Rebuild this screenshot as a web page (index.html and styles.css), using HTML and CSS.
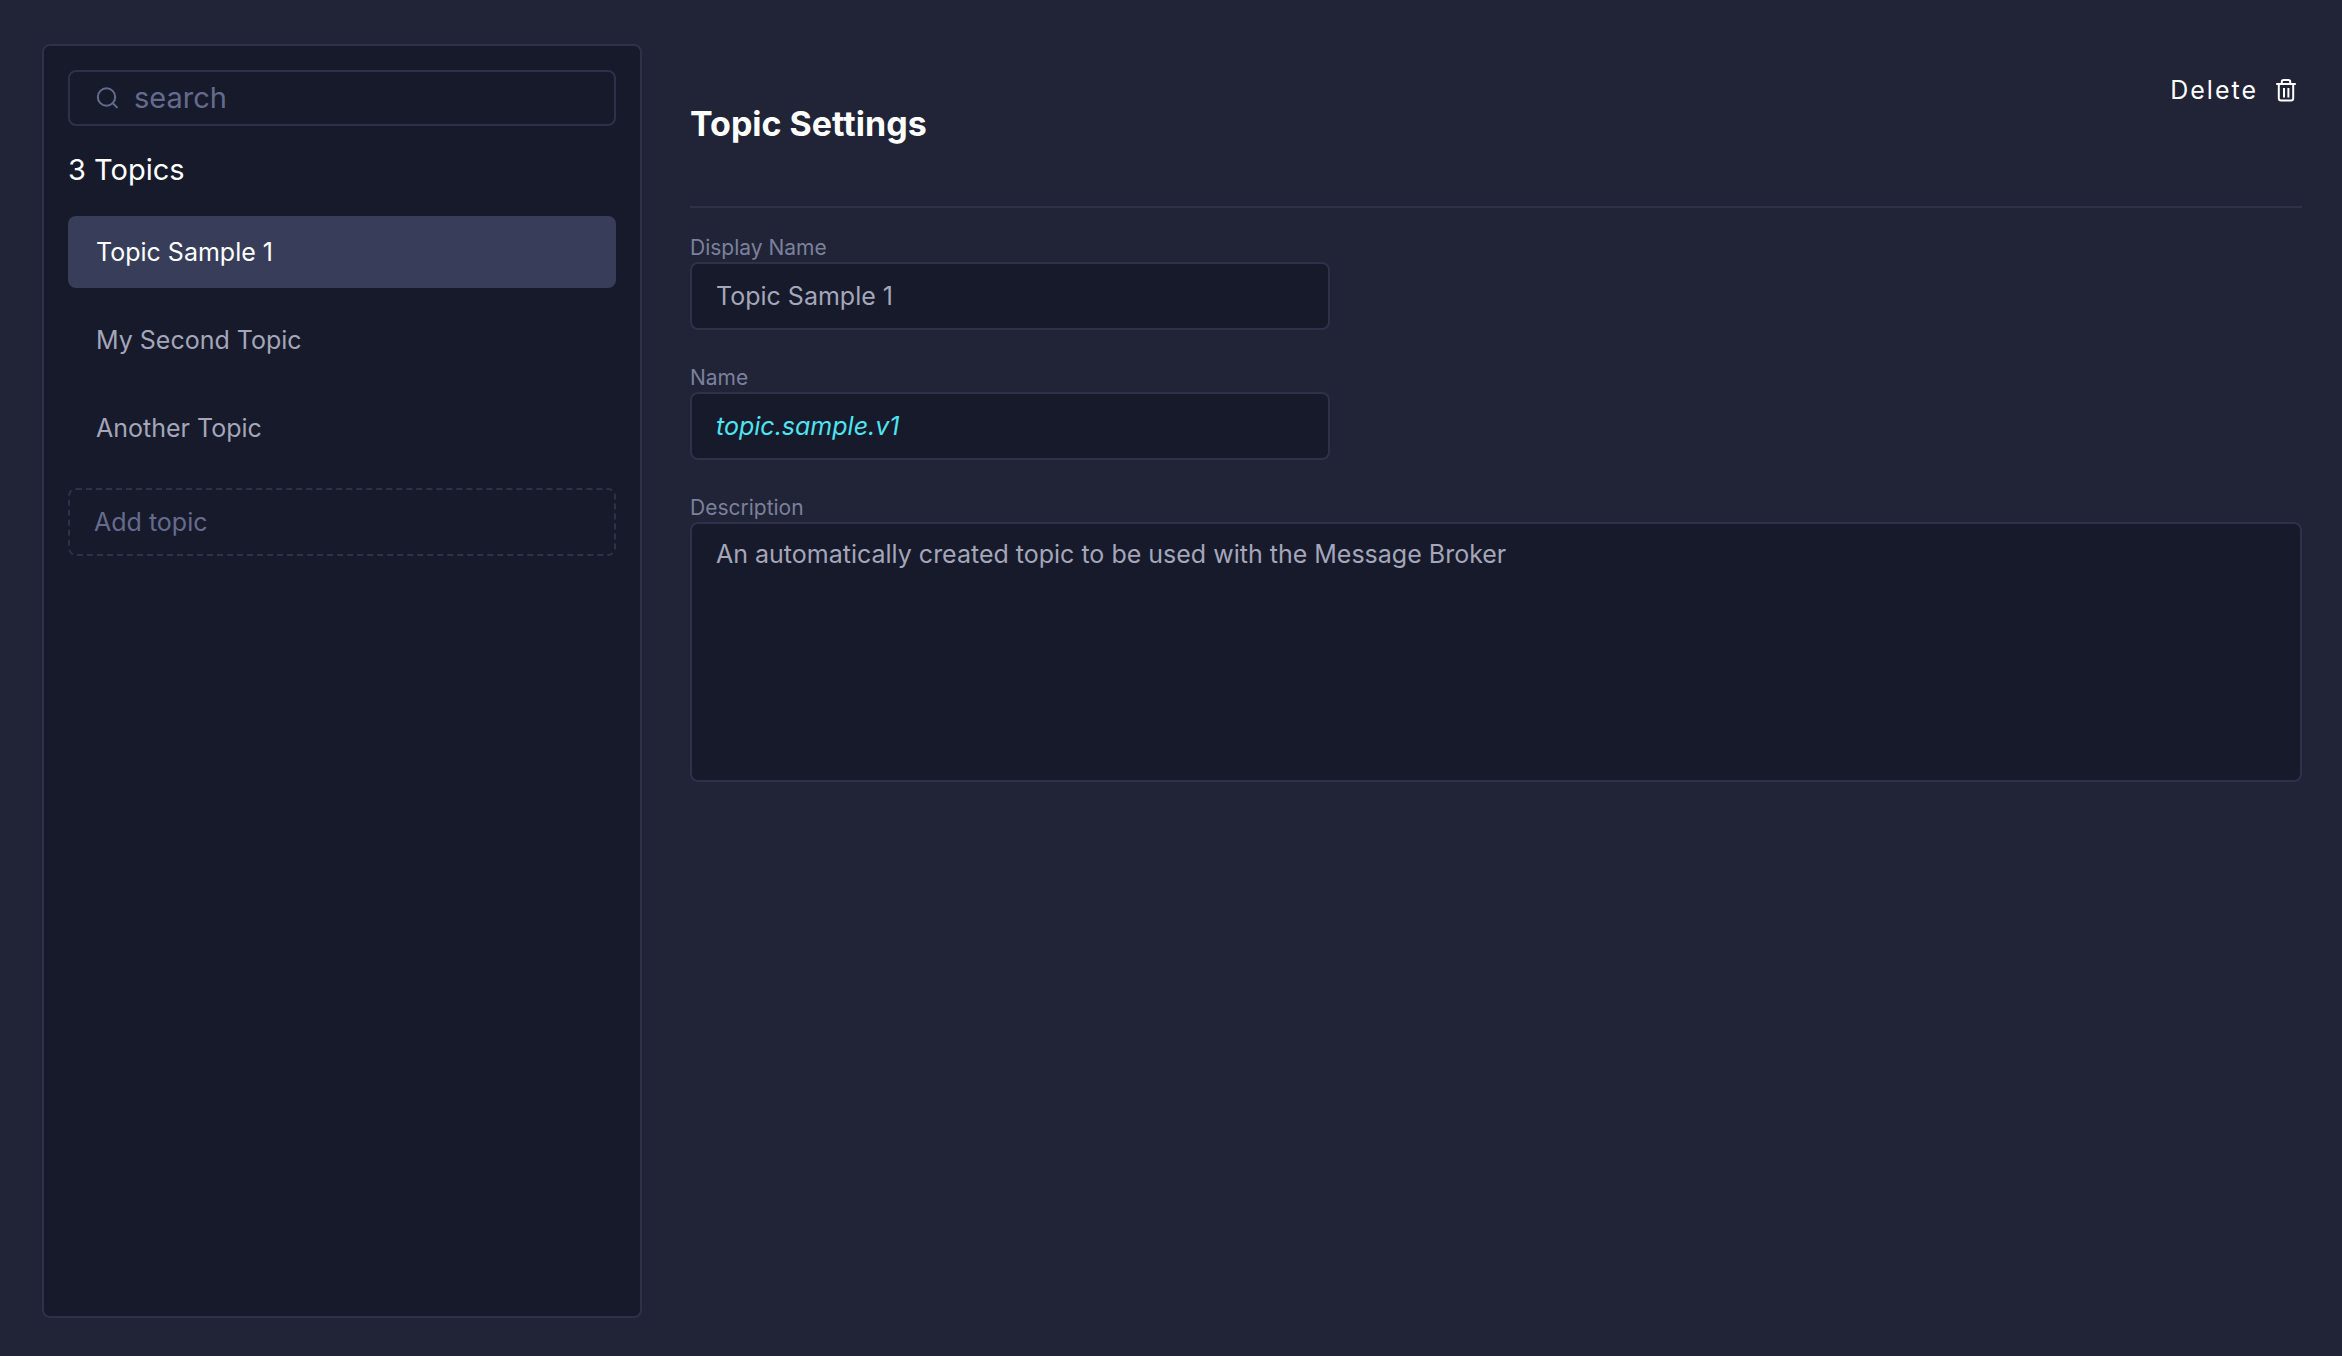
FILE: index.html
```html
<!DOCTYPE html>
<html lang="en">
<head>
  <meta charset="utf-8">
  <meta name="viewport" content="width=device-width, initial-scale=1">
  <title>Topic Settings</title>
  <link rel="stylesheet" href="styles.css">
</head>
<body>
  <div class="layout">
    <aside class="sidebar">
      <label class="search">
        <svg class="icon" viewBox="0 0 24 24" fill="none" stroke="currentColor" stroke-width="2" stroke-linecap="round" aria-hidden="true">
          <circle cx="10.5" cy="11" r="8.7"/>
          <path d="M16.8 17.3 21 21.4"/>
        </svg>
        <input class="search-input" type="search" placeholder="search" aria-label="Search topics">
      </label>
      <h2 class="count">3 Topics</h2>
      <nav class="topics">
        <a class="topic topic-active" href="#sample" aria-current="page">Topic Sample 1</a>
        <a class="topic" href="#second">My Second Topic</a>
        <a class="topic" href="#another">Another Topic</a>
      </nav>
      <button class="add" type="button">Add topic</button>
    </aside>
    <main class="settings">
      <header class="header">
        <h1 class="title">Topic Settings</h1>
        <button class="delete" type="button">
          <span>Delete</span>
          <svg class="icon" viewBox="0 0 24 24" fill="none" stroke="currentColor" stroke-width="2" stroke-linejoin="round" aria-hidden="true">
            <path d="M2.2 6h19.6"/>
            <path d="M7.8 6V3.8Q7.8 2 9.6 2h4.8q1.8 0 1.8 1.8V6"/>
            <path d="M4.8 6v14.2q0 2.3 2.3 2.3h9.8q2.3 0 2.3-2.3V6"/>
            <path d="M10 10v9.5M14.4 10v9.5"/>
          </svg>
        </button>
      </header>
      <form class="form">
        <div class="field">
          <label class="label" for="display-name">Display Name</label>
          <input class="control control-short" id="display-name" type="text" value="Topic Sample 1">
        </div>
        <div class="field">
          <label class="label" for="name">Name</label>
          <input class="control control-short control-code" id="name" type="text" value="topic.sample.v1">
        </div>
        <div class="field">
          <label class="label" for="description">Description</label>
          <textarea class="control control-area" id="description">An automatically created topic to be used with the Message Broker</textarea>
        </div>
      </form>
    </main>
  </div>
</body>
</html>
```
FILE: styles.css
```css
* {
  box-sizing: border-box;
}

body {
  margin: 0;
  background: #202436;
  color: #a4a6b9;
  font-family: Inter, "Open Sans", sans-serif;
  font-size: 25px;
  line-height: 36px;
}

button,
input,
textarea {
  margin: 0;
  font: inherit;
}

.layout {
  display: flex;
  gap: 48px;
  min-height: 100vh;
  padding: 44px 40px 38px 42px;
}

.sidebar {
  display: flex;
  flex: 0 0 600px;
  flex-direction: column;
  min-width: 0;
  padding: 24px;
  border: 2px solid #2d3149;
  border-radius: 8px;
  background: #161a2b;
}

.icon {
  flex: none;
  width: 24px;
  height: 24px;
}

.search {
  display: flex;
  align-items: center;
  gap: 14px;
  height: 56px;
  padding: 0 26px;
  border: 2px solid #2d3149;
  border-radius: 8px;
  color: #666b8d;
}

.search-input {
  flex: 1;
  min-width: 0;
  padding: 0;
  border: 0;
  outline: 0;
  appearance: none;
  background: none;
  color: inherit;
  font-size: 29px;
}

.search-input::placeholder {
  color: inherit;
  opacity: 1;
}

.count {
  margin: 24px 0 26px;
  color: #fff;
  font-size: 29px;
  font-weight: 400;
  line-height: 40px;
}

.topics {
  display: flex;
  flex-direction: column;
  gap: 16px;
}

.topic {
  padding: 18px 28px;
  border-radius: 8px;
  color: #a4a6b9;
  text-decoration: none;
}

.topic-active {
  background: #383e59;
  color: #fff;
}

.add {
  height: 68px;
  margin-top: 24px;
  padding: 0 24px;
  border: 2px dashed #2d3149;
  border-radius: 8px;
  background: none;
  color: #666b8d;
  text-align: left;
}

.settings {
  flex: 1;
  min-width: 0;
}

.header {
  display: flex;
  align-items: flex-start;
  justify-content: space-between;
  height: 164px;
  border-bottom: 2px solid #2d3149;
}

.title {
  margin: 56px 0 0;
  color: #fff;
  font-size: 34px;
  font-weight: 700;
  line-height: 48px;
}

.delete {
  display: flex;
  align-items: center;
  gap: 16px;
  margin-top: 28px;
  padding: 0 4px;
  border: 0;
  background: none;
  color: #fff;
  letter-spacing: 2px;
}

.form {
  display: flex;
  flex-direction: column;
  gap: 34px;
  padding-top: 26px;
}

.field {
  display: flex;
  flex-direction: column;
}

.label {
  color: #7c809c;
  font-size: 21px;
  line-height: 28px;
}

.control {
  height: 68px;
  padding: 0 24px;
  border: 2px solid #2d3149;
  border-radius: 8px;
  outline: 0;
  background: #161a2b;
  color: #a4a6b9;
}

.control-short {
  width: 100%;
  max-width: 640px;
}

.control-code {
  color: #50e3f0;
  font-style: italic;
}

.control-area {
  height: 260px;
  padding: 12px 24px;
  resize: none;
}
```
